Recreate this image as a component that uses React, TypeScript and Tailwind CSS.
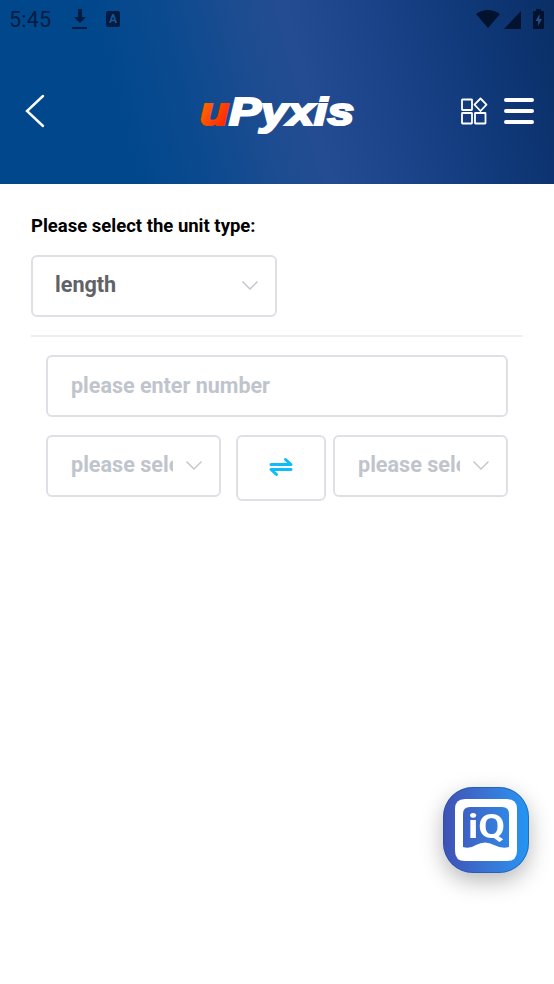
import React, { useState } from "react";

const StatusBar = () => (
  <div className="flex h-[38px] items-center justify-between pb-px pl-[9px] pr-[10px] text-[#041c42]">
    <div className="flex items-center">
      <span className="w-[62px] pt-[2px] text-[21.5px] leading-[26px] tracking-[0.2px]">5:45</span>
      <svg width="18" height="22" viewBox="0 0 18 22" fill="currentColor">
        <path d="M7 1h4v8h4l-6 6-6-6h4zM1 19h15v2H1z" />
      </svg>
      <span className="ml-[17px] flex h-[16px] w-[14px] items-center justify-center rounded-[2px] bg-[#041c42] text-[12px] font-bold leading-[16px] text-[#1a5596]">
        A
      </span>
    </div>
    <div className="flex items-center text-[#03132f]">
      <svg width="24" height="20" viewBox="0 0 24 20" fill="currentColor">
        <path d="M0 5Q12-3 24 5L12 19z" />
      </svg>
      <svg className="ml-[4px]" width="17" height="20" viewBox="0 0 17 20" fill="currentColor">
        <path d="M17 2v18H0z" />
      </svg>
      <svg className="ml-[12px]" width="11" height="20" viewBox="0 0 11 20">
        <path fill="currentColor" d="M3 0h5v2h2q1 0 1 1v16q0 1-1 1H1q-1 0-1-1V3q0-1 1-1h2z" />
        <path fill="#244c80" d="M6.500 5v5H9l-4 7v-5H2.500z" />
      </svg>
    </div>
  </div>
);

const Logo = () => (
  <svg className="overflow-visible" width="160" height="54" viewBox="0 0 160 54" aria-label="uPyxis">
    <defs>
      <linearGradient id="flame" x1="0" y1="0" x2="1" y2="1">
        <stop offset="0.2" stopColor="#ff6a00" />
        <stop offset="0.8" stopColor="#ff2a00" />
      </linearGradient>
    </defs>
    <g className="font-['Liberation_Sans'] font-bold italic" strokeWidth="2.200">
      <text x="3" y="41" fontSize="39" textLength="29" lengthAdjust="spacingAndGlyphs" fill="url(#flame)" stroke="url(#flame)">
        u
      </text>
      <text x="32" y="41" fontSize="38" textLength="125" lengthAdjust="spacingAndGlyphs" fill="#fff" stroke="#fff">
        Pyxis
      </text>
    </g>
  </svg>
);

const Header = () => (
  <header className="h-[184px] bg-[linear-gradient(75deg,#00478c_0%,#00478c_22%,#0d4a8f_36%,#1d4c91_47%,#244c92_55%,#1b4389_69%,#10397a_84%,#0a2f66_100%)]">
    <StatusBar />
    <div className="flex h-[146px] items-center pl-[25px] pr-[20px]">
      <button className="w-[172px]">
        <svg width="20" height="34" viewBox="0 0 20 34" fill="none" stroke="#fff" strokeWidth="2.400">
          <path d="M18 2L2 17l16 15" strokeLinecap="round" />
        </svg>
      </button>
      <Logo />
      <div className="ml-auto flex items-center gap-[16px]">
        <svg width="28" height="28" viewBox="0 0 28 28" fill="none" stroke="#fff" strokeWidth="1.800">
          <rect x="2" y="2.500" width="10" height="10.500" rx="0.500" />
          <rect x="2" y="16" width="10" height="10.500" rx="0.500" />
          <rect x="15" y="16" width="10.500" height="10.500" rx="0.500" />
          <path d="M20.500 1.500l6 6.200-6 6.300-6-6.300z" strokeLinejoin="round" />
        </svg>
        <svg width="30" height="28" viewBox="0 0 30 28" stroke="#fff" strokeWidth="4" strokeLinecap="round">
          <path d="M2 3h26M2 14h26M2 25h26" />
        </svg>
      </div>
    </div>
  </header>
);

const Chevron = () => (
  <svg className="shrink-0" width="18" height="12" viewBox="0 0 18 12" fill="none" stroke="#c0c4cc" strokeWidth="1.400">
    <path d="M1.500 1.500L9 9 16.500 1.500" />
  </svg>
);

const EmptySelect = () => (
  <button className="flex h-[62px] w-[175px] items-center rounded-[6px] border-2 border-[#dfe0e6] pb-px pl-[23px] text-left text-[21.6px] font-bold text-[#c0c4cc]">
    <span className="mr-[12px] w-[102px] overflow-hidden whitespace-nowrap">please select</span>
    <Chevron />
  </button>
);

const Assistant = () => (
  <button className="fixed left-[443px] top-[787px] h-[86px] w-[86px] rounded-[30px] bg-linear-to-r from-[#3f51b5] to-[#2196f3] shadow-[0_8px_22px_rgba(0,0,0,0.28)]">
    <svg width="86" height="86" viewBox="0 0 86 86">
      <rect x="0.500" y="0.500" width="85" height="85" rx="29.500" fill="none" stroke="#20539f" strokeOpacity="0.600" />
      <path
        fill="#fff"
        fillRule="evenodd"
        d="M22 12h42q10 0 10 10v42q0 10-10 10H22q-10 0-10-10V22q0-10 10-10zM27 20q-7 0-7 7v33q7 2 13-2 9-5 18 0 8 4 15 2V27q0-7-7-7z"
      />
      <text
        className="font-['Roboto'] font-bold"
        x="25"
        y="50.500"
        fontSize="34"
        textLength="37"
        lengthAdjust="spacingAndGlyphs"
        fill="#fff"
      >
        iQ
      </text>
    </svg>
  </button>
);

export default function App() {
  const [value, setValue] = useState("");

  return (
    <div className="min-h-screen bg-white font-['Roboto',sans-serif]">
      <Header />
      <main className="px-[31px] pt-[31px]">
        <h1 className="text-[18.5px] font-bold leading-[22px] text-black">Please select the unit type:</h1>
        <button className="mt-[18px] flex h-[62px] w-[246px] items-center justify-between rounded-[6px] border-2 border-[#dfe0e6] pb-px pl-[22px] pr-[16px] text-[21.6px] font-bold text-[#606266]">
          length
          <Chevron />
        </button>
        <div className="mt-[18px] h-[2px] bg-[#eeeef0]" />
        <div className="px-[15px] pt-[18px]">
          <input
            value={value}
            onChange={(e) => setValue(e.target.value)}
            placeholder="please enter number"
            className="block h-[62px] w-full rounded-[6px] border-2 border-[#dfe0e6] px-[23px] pb-px text-[21.5px] font-bold text-[#606266] outline-none placeholder:text-[#c0c4cc]"
          />
          <div className="mt-[18px] flex items-start">
            <EmptySelect />
            <button className="ml-[15px] mr-[7px] flex h-[66px] w-[90px] items-center justify-center rounded-[6px] border-2 border-[#dfe0e6] pb-[3px]">
              <svg width="24" height="20" viewBox="0 0 24 20" fill="none" stroke="#0dbcf8" strokeWidth="3" strokeLinecap="round" strokeLinejoin="round">
                <path d="M2 7.500h20L16.500 2.500M22 12.500H2L7.500 17.500" />
              </svg>
            </button>
            <EmptySelect />
          </div>
        </div>
      </main>
      <Assistant />
    </div>
  );
}
